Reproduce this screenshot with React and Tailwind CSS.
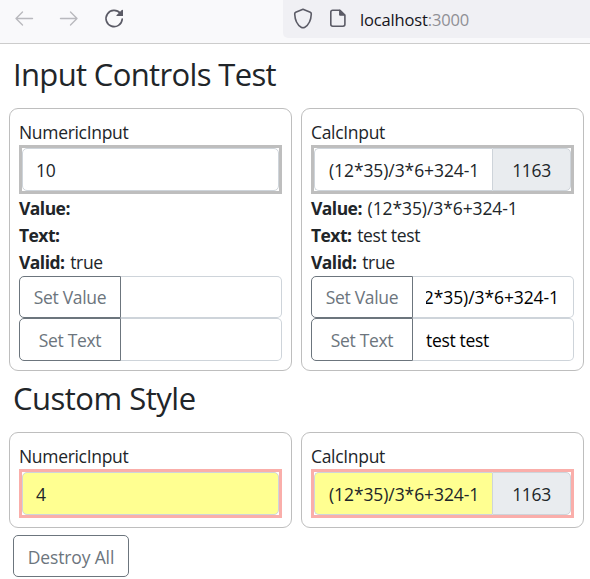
function BrowserBar() {
  return (
    <header className="flex h-[44px] items-start justify-between border-b border-[#cccccc] bg-[#f9f9fb]">
      <div className="flex h-[38px] items-center gap-[23px] pl-[13px]">
        <svg className="size-[22px]" viewBox="0 0 22 22" fill="none" stroke="#b9b9be" strokeWidth="1.4" strokeLinecap="round" strokeLinejoin="round">
          <path d="M19.5 10.5H3M9.5 4L3 10.5L9.5 17" />
        </svg>
        <svg className="size-[22px]" viewBox="0 0 22 22" fill="none" stroke="#b9b9be" strokeWidth="1.4" strokeLinecap="round" strokeLinejoin="round">
          <path d="M2.5 10.5H19M12.5 4L19 10.5L12.5 17" />
        </svg>
        <svg className="size-[22px]" viewBox="0 0 22 22" fill="none">
          <path d="M17.3 5.3A8.1 8.1 0 1 0 19.2 11.2" stroke="#5b5b66" strokeWidth="1.7" strokeLinecap="round" />
          <path d="M20 2.2V8H13.8Q13 8 13.5 7.3L18.8 2Q20 1.2 20 2.2Z" fill="#5b5b66" />
        </svg>
      </div>
      <div className="flex h-[38px] w-[307px] items-center rounded-bl-[5px] bg-[#f0f0f4] pl-[10px]">
        <svg className="h-[22px] w-5" viewBox="0 0 20 22" fill="none" stroke="#5b5b66" strokeWidth="1.6" strokeLinejoin="round">
          <path d="M10 1.3L17.3 4.2Q18.4 4.7 18.3 6C18 12.5 15.5 17 11.8 19.3Q10 20.3 8.2 19.3C4.5 17 2 12.5 1.7 6Q1.6 4.7 2.7 4.2Z" />
        </svg>
        <svg className="ml-[16px] h-[22px] w-[18px]" viewBox="0 0 18 22" fill="none">
          <path d="M11 2.2H3.7Q1.8 2.2 1.8 4.1V16.3Q1.8 18.2 3.7 18.2H14Q15.9 18.2 15.9 16.3V7Z" stroke="#5b5b66" strokeWidth="1.6" strokeLinejoin="round" />
          <path d="M10.6 2V7.2H16Z" fill="#5b5b66" stroke="#5b5b66" strokeLinejoin="round" />
        </svg>
        <span className="ml-[13px] pt-[2px] text-[16.5px] leading-[36px] tracking-[-0.15px] text-[#15141a]">
          localhost<span className="text-[#8f8f95]">:3000</span>
        </span>
      </div>
    </header>
  );
}

function Card({ title, children }) {
  return (
    <section className="w-[283px] rounded-[9px] border border-[#bebebe] p-[9px]">
      <div className="h-[27px] pt-px leading-[27px]">{title}</div>
      {children}
    </section>
  );
}

function Frame({ custom, children }) {
  return (
    <div className={`flex h-[49px] border-[3px] ${custom ? "border-[#faaeaa]" : "border-[#bebebe]"}`}>
      {children}
    </div>
  );
}

function Expression() {
  return <span className="tracking-[-0.09px]">(12*35)/3*6+324-1</span>;
}

function NumericInput({ value, custom }) {
  return (
    <Frame custom={custom}>
      <div className={`flex-1 rounded-[5px] border border-[#ced4da] pl-[13px] leading-[43px] ${custom ? "bg-[#ffff91]" : "bg-white"}`}>
        {value}
      </div>
    </Frame>
  );
}

function CalcInput({ custom }) {
  return (
    <Frame custom={custom}>
      <div className={`w-[178px] rounded-l-[5px] border border-r-0 border-[#ced4da] pl-[14px] leading-[43px] ${custom ? "bg-[#ffff91]" : "bg-white"}`}>
        <Expression />
      </div>
      <div className="flex-1 rounded-r-[5px] border border-[#ced4da] bg-[#e9ecef] text-center leading-[43px]">1163</div>
    </Frame>
  );
}

function Info({ label, children }) {
  return (
    <div className="h-[27px] leading-[27px]">
      <b className="mr-[1.5px] tracking-[-0.55px]">{label}:</b> {children}
    </div>
  );
}

function Setter({ label, value, tall }) {
  return (
    <div className={`flex ${tall ? "h-[43px] leading-[43px]" : "h-[42px] leading-[41px]"}`}>
      <button className="w-[102px] shrink-0 rounded-l-[5px] border border-[#6c757d] text-center text-[#6c757d]">{label}</button>
      <div className="flex min-w-0 flex-1 rounded-r-[5px] border border-l-0 border-[#ced4da] pl-[13px] pr-[14px]">
        <div className={`flex min-w-0 flex-1 overflow-hidden whitespace-nowrap text-black ${tall ? "justify-start" : "justify-end"}`}>
          {value}
        </div>
      </div>
    </div>
  );
}

export default function App() {
  return (
    <div className="h-[579px] w-[590px] overflow-hidden bg-white font-['Open_Sans',sans-serif] text-[17.5px] tracking-[-0.32px] text-[#212529]">
      <BrowserBar />
      <main className="pl-[9px]">
        <h1 className="flex h-[64px] items-center pb-[3px] pl-1 text-[31px] tracking-[-0.65px]">Input Controls Test</h1>
        <div className="flex gap-[9px]">
          <Card title="NumericInput">
            <NumericInput value="10" />
            <div className="pt-px">
              <Info label="Value" />
              <Info label="Text" />
              <Info label="Valid">true</Info>
            </div>
            <Setter label="Set Value" />
            <Setter label="Set Text" tall />
          </Card>
          <Card title="CalcInput">
            <CalcInput />
            <div className="pt-px">
              <Info label="Value"><Expression /></Info>
              <Info label="Text">test test</Info>
              <Info label="Valid">true</Info>
            </div>
            <Setter label="Set Value" value={<Expression />} />
            <Setter label="Set Text" value="test test" tall />
          </Card>
        </div>
        <h1 className="flex h-[61px] items-center pb-[6px] pl-1 text-[31px] tracking-[-0.5px]">Custom Style</h1>
        <div className="flex gap-[9px]">
          <Card title="NumericInput">
            <NumericInput value="4" custom />
          </Card>
          <Card title="CalcInput">
            <CalcInput custom />
          </Card>
        </div>
        <button className="mt-[7px] ml-1 h-[42px] w-[116px] rounded-[5px] border border-[#6c757d] pt-[3px] tracking-[-0.15px] text-[#6c757d]">Destroy All</button>
      </main>
    </div>
  );
}
